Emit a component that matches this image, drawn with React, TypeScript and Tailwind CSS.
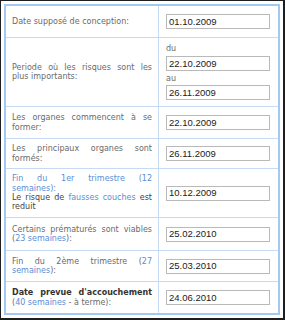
import React from "react";

const J = "block text-justify [text-align-last:justify]";
const L = "block";

function Link({ children }: { children: React.ReactNode }) {
  return <span className="text-[#5b8ed3]">{children}</span>;
}

function Input({ value }: { value: string }) {
  return (
    <div className="w-[104px] h-[15px] border border-[#b9b9b9] bg-white flex items-center pl-[2px] text-[9.5px] leading-none text-[#1a1a1a] [font-family:'Liberation_Sans',Arial,sans-serif]">
      {value}
    </div>
  );
}

function Row({
  h,
  label,
  right,
  last,
}: {
  h: string;
  label: React.ReactNode;
  right: React.ReactNode;
  last?: boolean;
}) {
  return (
    <div className={`flex ${h} ${last ? "" : "border-b border-[#c6dbf3]"}`}>
      <div className="w-[153px] border-r border-[#c6dbf3] flex flex-col justify-center pl-[6px] pr-[6px] text-[8px] leading-[9.4px] text-[#6a6a6a]">
        {label}
      </div>
      <div className="flex-1 flex flex-col justify-center pl-[7px]">{right}</div>
    </div>
  );
}

export default function App() {
  return (
    <div className="w-[285px] h-[320px] bg-white border-t border-l border-r-2 border-b-2 border-[#1e1e1e] pt-[3px] pl-[3px] pr-[3px] pb-[3px] [font-family:'DejaVu_Sans',Verdana,sans-serif]">
      <div className="w-full h-full border-2 border-[#a3c8f2] flex flex-col">
        <Row
          h="h-[32px]"
          label={<span className={L}>Date supposé de conception:</span>}
          right={<Input value="01.10.2009" />}
        />
        <Row
          h="h-[69px]"
          label={
            <>
              <span className={J}>Periode où les risques sont les</span>
              <span className={L}>plus importants:</span>
            </>
          }
          right={
            <div className="flex flex-col">
              <span className="text-[8px] leading-[10px] text-[#6a6a6a] mb-[2px]">du</span>
              <Input value="22.10.2009" />
              <span className="text-[8px] leading-[10px] text-[#6a6a6a] mt-[3px] mb-[1px]">au</span>
              <Input value="26.11.2009" />
            </div>
          }
        />
        <Row
          h="h-[32px]"
          label={
            <>
              <span className={J}>Les organes commencent à se</span>
              <span className={L}>former:</span>
            </>
          }
          right={<Input value="22.10.2009" />}
        />
        <Row
          h="h-[30px]"
          label={
            <>
              <span className={J}>Les principaux organes sont</span>
              <span className={L}>formés:</span>
            </>
          }
          right={<Input value="26.11.2009" />}
        />
        <Row
          h="h-[49px]"
          label={
            <>
              <span className={`${J} text-[#5b8ed3]`}>Fin du 1er trimestre (12</span>
              <span className={`${L} text-[#5b8ed3]`}>semaines):</span>
              <span className={`${J} text-[#454545]`}>
                Le risque de <Link>fausses couches</Link> est
              </span>
              <span className={`${L} text-[#454545]`}>reduit</span>
            </>
          }
          right={<Input value="10.12.2009" />}
        />
        <Row
          h="h-[33px]"
          label={
            <>
              <span className={J}>Certains prématurés sont viables</span>
              <span className={L}>
                (<Link>23 semaines</Link>):
              </span>
            </>
          }
          right={<Input value="25.02.2010" />}
        />
        <Row
          h="h-[31px]"
          label={
            <>
              <span className={J}>
                Fin du 2ème trimestre (<Link>27</Link>
              </span>
              <span className={L}>
                <Link>semaines</Link>):
              </span>
            </>
          }
          right={<Input value="25.03.2010" />}
        />
        <Row
          last
          h="flex-1"
          label={
            <>
              <span className={`${J} font-bold text-[#333333]`}>Date prevue d'accouchement</span>
              <span className={L}>
                (<Link>40 semaines</Link> - à terme):
              </span>
            </>
          }
          right={<Input value="24.06.2010" />}
        />
      </div>
    </div>
  );
}
